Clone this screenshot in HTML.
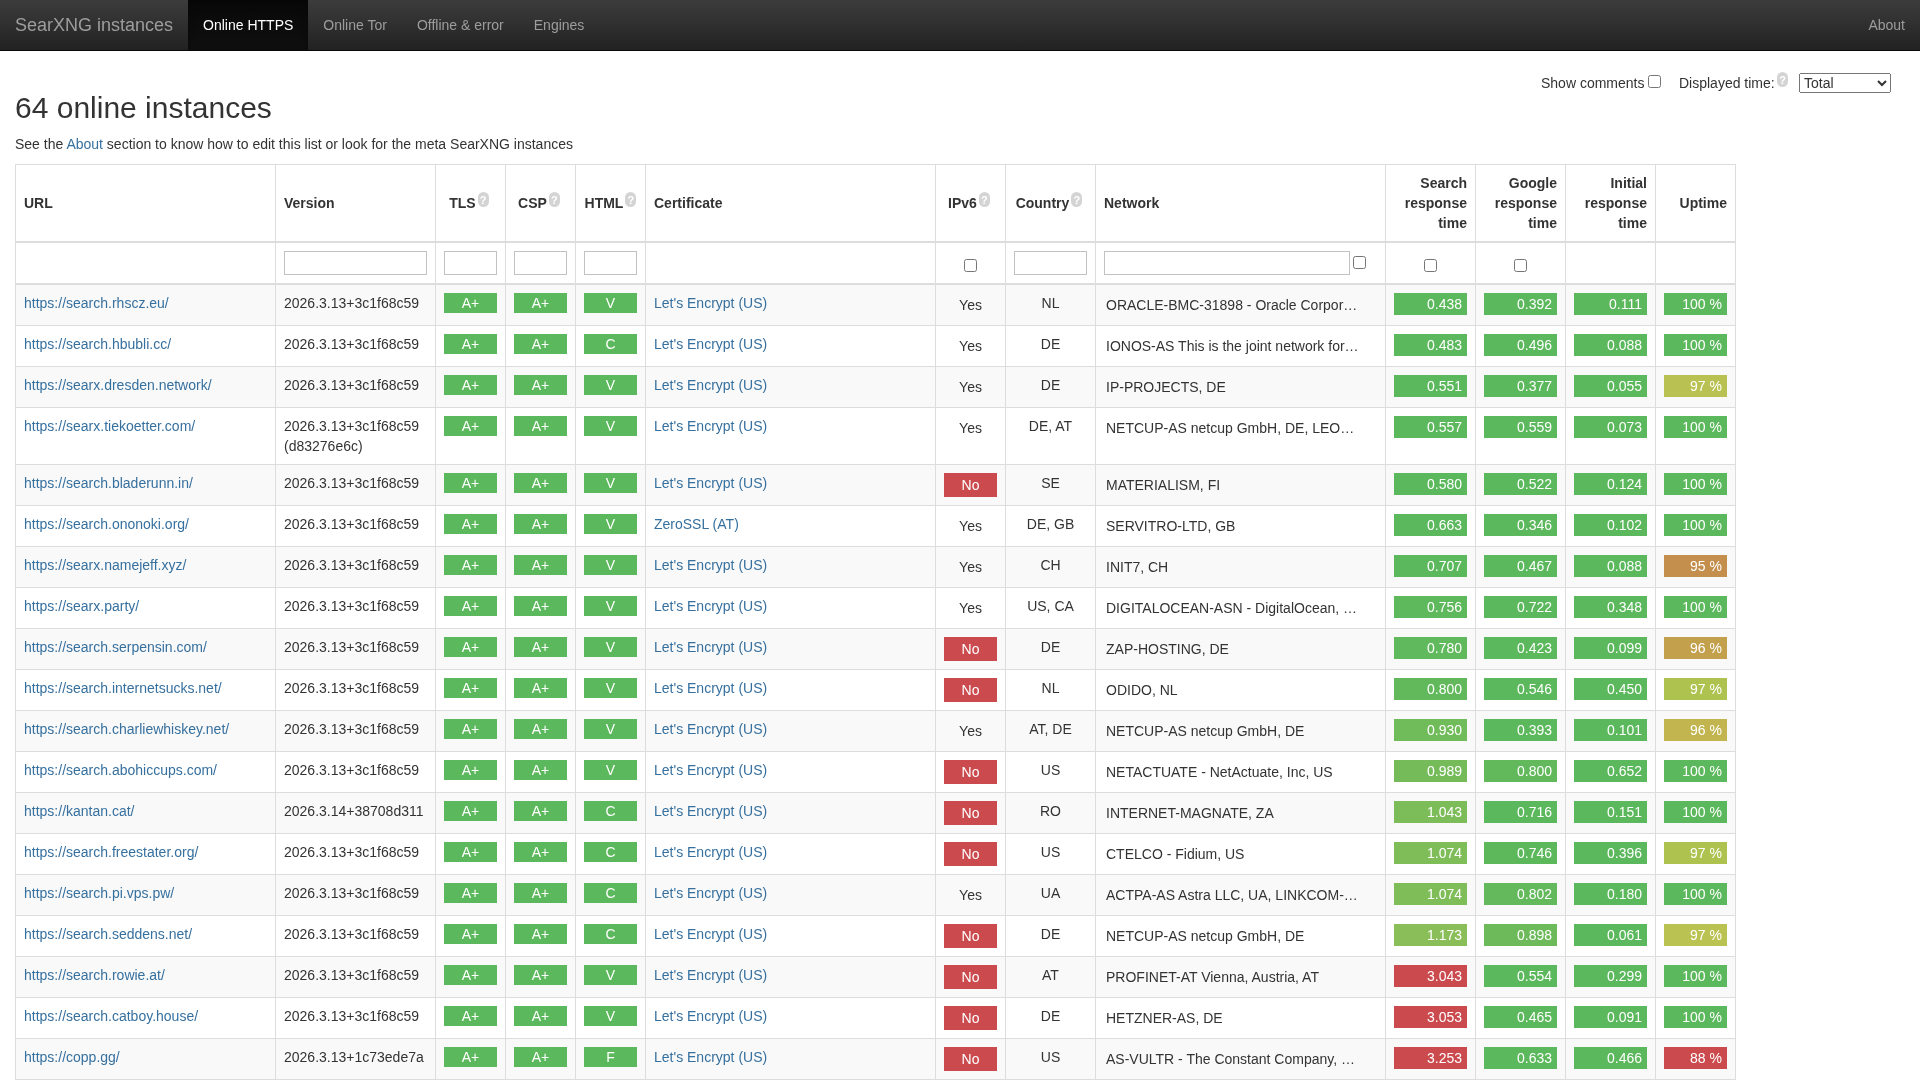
<!DOCTYPE html><html><head><meta charset="utf-8"><title>SearXNG instances</title><style>
*{box-sizing:border-box}
html,body{margin:0;padding:0;background:#fff}
body{-webkit-font-smoothing:antialiased;will-change:transform}
body{font-family:"Liberation Sans",sans-serif;font-size:14px;line-height:20px;color:#333;width:1920px;height:1080px;overflow:hidden;position:relative}
a{color:#36709f;text-decoration:none}
.nav{height:51px;border-bottom:1px solid #080808;background:linear-gradient(to bottom,#3c3c3c 0%,#222 100%);position:relative}
.nav a{float:left;height:50px;padding:15px;line-height:20px;color:#9d9d9d;white-space:nowrap}
.nav a.rt{float:right}
.nav .brand{font-size:18px;padding:15px}
.nav .active{color:#fff;background:linear-gradient(to bottom,#080808 0%,#0f0f0f 100%);box-shadow:inset 0 3px 9px rgba(0,0,0,.25)}
.ctl{position:absolute;left:0;top:0;white-space:nowrap}
h1{position:absolute;left:15px;top:91px;margin:0;font-size:30px;line-height:33px;font-weight:500;color:#333}
p.intro{position:absolute;left:15px;top:134px;margin:0}
table{position:absolute;left:15px;top:164px;border-collapse:collapse;border-spacing:0;table-layout:fixed;width:1720px;border:1px solid #ddd}
th,td{border:1px solid #ddd;padding:8px;vertical-align:top;text-align:left}
thead th{vertical-align:bottom;border-bottom:2px solid #ddd}
thead tr.hdr th{vertical-align:middle;font-weight:bold}
tbody tr:nth-child(odd){background:#f9f9f9}
.c{text-align:center}
.r{text-align:right}
.q{display:inline-block;width:11px;height:15px;border-radius:5.5px;background:#d4d4d4;vertical-align:top;margin-left:2px;margin-top:-1px;color:#fff;font-size:11px;line-height:16px;text-align:center;font-weight:bold}
th.qc{white-space:nowrap}
th.qc span.hq{position:relative;left:-1.5px}
.lbl{display:block;color:#fff;text-align:center;line-height:20px;height:20px;background:#5cb85c}
.tm{display:block;color:#fff;text-align:right;line-height:20px;height:22px;padding:1px 5px 1px 0}
.no{display:block;color:#fff;text-align:center;line-height:20px;height:24px;padding:2px 0;background:#ca4a4d}
.yes{display:block;text-align:center;line-height:20px;height:24px;padding:2px 0}
.net{display:block;padding:2px 0 0 2px;white-space:nowrap;overflow:hidden}
input[type=text]{display:block;width:100%;height:24px;margin:0;padding:1px 2px;border:1px solid #c2c2c2;font:inherit;background:#fff}
input[type=checkbox]{margin:0;width:13px;height:13px;position:relative;top:2px}
.nck{top:1px!important;left:-1px}
</style></head><body><div class="nav"><a class="brand" href="#">SearXNG instances</a><a class="active" href="#">Online HTTPS</a><a href="#">Online Tor</a><a href="#">Offline &amp; error</a><a href="#">Engines</a><a class="rt" href="#">About</a></div><div class="ctl"><span style="position:absolute;left:1541px;top:73px">Show comments</span><input type="checkbox" style="position:absolute;left:1648px;top:75px"><span style="position:absolute;left:1679px;top:73px">Displayed time:</span><span class="q" style="position:absolute;left:1777px;top:72px;margin:0">?</span><select style="position:absolute;left:1799px;top:73px;width:92px;height:20px;font-family:inherit;font-size:14px;color:#333"><option>Total</option></select></div><h1>64 online instances</h1><p class="intro">See the <a href="#">About</a> section to know how to edit this list or look for the meta SearXNG instances</p><table><colgroup><col style="width:260px"><col style="width:160px"><col style="width:70px"><col style="width:70px"><col style="width:70px"><col style="width:290px"><col style="width:70px"><col style="width:90px"><col style="width:290px"><col style="width:90px"><col style="width:90px"><col style="width:90px"><col style="width:80px"></colgroup><thead><tr class="hdr"><th>URL</th><th>Version</th><th class="c qc"><span class="hq">TLS<span class="q">?</span></span></th><th class="c qc"><span class="hq">CSP<span class="q">?</span></span></th><th class="c qc"><span class="hq" style="left:0">HTML<span class="q">?</span></span></th><th>Certificate</th><th class="c qc"><span class="hq">IPv6<span class="q">?</span></span></th><th class="c qc"><span class="hq">Country<span class="q">?</span></span></th><th>Network</th><th class="r">Search<br>response<br>time</th><th class="r">Google<br>response<br>time</th><th class="r">Initial<br>response<br>time</th><th class="r">Uptime</th></tr><tr class="flt"><th></th><th><input type="text"></th><th><input type="text"></th><th><input type="text"></th><th><input type="text"></th><th></th><th class="c"><input type="checkbox"></th><th><input type="text"></th><th><input type="text" style="display:inline-block;width:246px"> <input type="checkbox" class="nck"></th><th class="c"><input type="checkbox"></th><th class="c"><input type="checkbox"></th><th></th><th></th></tr></thead><tbody><tr><td><a href="#">https://search.rhscz.eu/</a></td><td>2026.3.13+3c1f68c59</td><td><span class="lbl">A+</span></td><td><span class="lbl">A+</span></td><td><span class="lbl">V</span></td><td><a href="#">Let's Encrypt (US)</a></td><td><span class="yes">Yes</span></td><td class="c">NL</td><td><span class="net">ORACLE-BMC-31898 - Oracle Corpor…</span></td><td><span class="tm" style="background:#5cb85c">0.438</span></td><td><span class="tm" style="background:#5cb85c">0.392</span></td><td><span class="tm" style="background:#5cb85c">0.111</span></td><td><span class="tm" style="background:#5cb85c">100 %</span></td></tr><tr><td><a href="#">https://search.hbubli.cc/</a></td><td>2026.3.13+3c1f68c59</td><td><span class="lbl">A+</span></td><td><span class="lbl">A+</span></td><td><span class="lbl">C</span></td><td><a href="#">Let's Encrypt (US)</a></td><td><span class="yes">Yes</span></td><td class="c">DE</td><td><span class="net">IONOS-AS This is the joint network for…</span></td><td><span class="tm" style="background:#5cb85c">0.483</span></td><td><span class="tm" style="background:#5cb85c">0.496</span></td><td><span class="tm" style="background:#5cb85c">0.088</span></td><td><span class="tm" style="background:#5cb85c">100 %</span></td></tr><tr><td><a href="#">https://searx.dresden.network/</a></td><td>2026.3.13+3c1f68c59</td><td><span class="lbl">A+</span></td><td><span class="lbl">A+</span></td><td><span class="lbl">V</span></td><td><a href="#">Let's Encrypt (US)</a></td><td><span class="yes">Yes</span></td><td class="c">DE</td><td><span class="net">IP-PROJECTS, DE</span></td><td><span class="tm" style="background:#5cb85c">0.551</span></td><td><span class="tm" style="background:#5cb85c">0.377</span></td><td><span class="tm" style="background:#5cb85c">0.055</span></td><td><span class="tm" style="background:#b8c152">97 %</span></td></tr><tr><td><a href="#">https://searx.tiekoetter.com/</a></td><td>2026.3.13+3c1f68c59<br>(d83276e6c)</td><td><span class="lbl">A+</span></td><td><span class="lbl">A+</span></td><td><span class="lbl">V</span></td><td><a href="#">Let's Encrypt (US)</a></td><td><span class="yes">Yes</span></td><td class="c">DE, AT</td><td><span class="net">NETCUP-AS netcup GmbH, DE, LEO…</span></td><td><span class="tm" style="background:#5cb85c">0.557</span></td><td><span class="tm" style="background:#5cb85c">0.559</span></td><td><span class="tm" style="background:#5cb85c">0.073</span></td><td><span class="tm" style="background:#5cb85c">100 %</span></td></tr><tr><td><a href="#">https://search.bladerunn.in/</a></td><td>2026.3.13+3c1f68c59</td><td><span class="lbl">A+</span></td><td><span class="lbl">A+</span></td><td><span class="lbl">V</span></td><td><a href="#">Let's Encrypt (US)</a></td><td><span class="no">No</span></td><td class="c">SE</td><td><span class="net">MATERIALISM, FI</span></td><td><span class="tm" style="background:#5cb85c">0.580</span></td><td><span class="tm" style="background:#5cb85c">0.522</span></td><td><span class="tm" style="background:#5cb85c">0.124</span></td><td><span class="tm" style="background:#5cb85c">100 %</span></td></tr><tr><td><a href="#">https://search.ononoki.org/</a></td><td>2026.3.13+3c1f68c59</td><td><span class="lbl">A+</span></td><td><span class="lbl">A+</span></td><td><span class="lbl">V</span></td><td><a href="#">ZeroSSL (AT)</a></td><td><span class="yes">Yes</span></td><td class="c">DE, GB</td><td><span class="net">SERVITRO-LTD, GB</span></td><td><span class="tm" style="background:#5cb85c">0.663</span></td><td><span class="tm" style="background:#5cb85c">0.346</span></td><td><span class="tm" style="background:#5cb85c">0.102</span></td><td><span class="tm" style="background:#5cb85c">100 %</span></td></tr><tr><td><a href="#">https://searx.namejeff.xyz/</a></td><td>2026.3.13+3c1f68c59</td><td><span class="lbl">A+</span></td><td><span class="lbl">A+</span></td><td><span class="lbl">V</span></td><td><a href="#">Let's Encrypt (US)</a></td><td><span class="yes">Yes</span></td><td class="c">CH</td><td><span class="net">INIT7, CH</span></td><td><span class="tm" style="background:#5cb85c">0.707</span></td><td><span class="tm" style="background:#5cb85c">0.467</span></td><td><span class="tm" style="background:#5cb85c">0.088</span></td><td><span class="tm" style="background:#c48e4c">95 %</span></td></tr><tr><td><a href="#">https://searx.party/</a></td><td>2026.3.13+3c1f68c59</td><td><span class="lbl">A+</span></td><td><span class="lbl">A+</span></td><td><span class="lbl">V</span></td><td><a href="#">Let's Encrypt (US)</a></td><td><span class="yes">Yes</span></td><td class="c">US, CA</td><td><span class="net">DIGITALOCEAN-ASN - DigitalOcean, …</span></td><td><span class="tm" style="background:#5eb85c">0.756</span></td><td><span class="tm" style="background:#5cb85c">0.722</span></td><td><span class="tm" style="background:#5cb85c">0.348</span></td><td><span class="tm" style="background:#5cb85c">100 %</span></td></tr><tr><td><a href="#">https://search.serpensin.com/</a></td><td>2026.3.13+3c1f68c59</td><td><span class="lbl">A+</span></td><td><span class="lbl">A+</span></td><td><span class="lbl">V</span></td><td><a href="#">Let's Encrypt (US)</a></td><td><span class="no">No</span></td><td class="c">DE</td><td><span class="net">ZAP-HOSTING, DE</span></td><td><span class="tm" style="background:#60b95c">0.780</span></td><td><span class="tm" style="background:#5cb85c">0.423</span></td><td><span class="tm" style="background:#5cb85c">0.099</span></td><td><span class="tm" style="background:#c2a04c">96 %</span></td></tr><tr><td><a href="#">https://search.internetsucks.net/</a></td><td>2026.3.13+3c1f68c59</td><td><span class="lbl">A+</span></td><td><span class="lbl">A+</span></td><td><span class="lbl">V</span></td><td><a href="#">Let's Encrypt (US)</a></td><td><span class="no">No</span></td><td class="c">NL</td><td><span class="net">ODIDO, NL</span></td><td><span class="tm" style="background:#62b95b">0.800</span></td><td><span class="tm" style="background:#5cb85c">0.546</span></td><td><span class="tm" style="background:#5cb85c">0.450</span></td><td><span class="tm" style="background:#aec250">97 %</span></td></tr><tr><td><a href="#">https://search.charliewhiskey.net/</a></td><td>2026.3.13+3c1f68c59</td><td><span class="lbl">A+</span></td><td><span class="lbl">A+</span></td><td><span class="lbl">V</span></td><td><a href="#">Let's Encrypt (US)</a></td><td><span class="yes">Yes</span></td><td class="c">AT, DE</td><td><span class="net">NETCUP-AS netcup GmbH, DE</span></td><td><span class="tm" style="background:#70bb5a">0.930</span></td><td><span class="tm" style="background:#5cb85c">0.393</span></td><td><span class="tm" style="background:#5cb85c">0.101</span></td><td><span class="tm" style="background:#c2b44e">96 %</span></td></tr><tr><td><a href="#">https://search.abohiccups.com/</a></td><td>2026.3.13+3c1f68c59</td><td><span class="lbl">A+</span></td><td><span class="lbl">A+</span></td><td><span class="lbl">V</span></td><td><a href="#">Let's Encrypt (US)</a></td><td><span class="no">No</span></td><td class="c">US</td><td><span class="net">NETACTUATE - NetActuate, Inc, US</span></td><td><span class="tm" style="background:#76bb5a">0.989</span></td><td><span class="tm" style="background:#62b95b">0.800</span></td><td><span class="tm" style="background:#5cb85c">0.652</span></td><td><span class="tm" style="background:#5cb85c">100 %</span></td></tr><tr><td><a href="#">https://kantan.cat/</a></td><td>2026.3.14+38708d311</td><td><span class="lbl">A+</span></td><td><span class="lbl">A+</span></td><td><span class="lbl">C</span></td><td><a href="#">Let's Encrypt (US)</a></td><td><span class="no">No</span></td><td class="c">RO</td><td><span class="net">INTERNET-MAGNATE, ZA</span></td><td><span class="tm" style="background:#7cbc59">1.043</span></td><td><span class="tm" style="background:#5cb85c">0.716</span></td><td><span class="tm" style="background:#5cb85c">0.151</span></td><td><span class="tm" style="background:#5cb85c">100 %</span></td></tr><tr><td><a href="#">https://search.freestater.org/</a></td><td>2026.3.13+3c1f68c59</td><td><span class="lbl">A+</span></td><td><span class="lbl">A+</span></td><td><span class="lbl">C</span></td><td><a href="#">Let's Encrypt (US)</a></td><td><span class="no">No</span></td><td class="c">US</td><td><span class="net">CTELCO - Fidium, US</span></td><td><span class="tm" style="background:#7fbd59">1.074</span></td><td><span class="tm" style="background:#5db85c">0.746</span></td><td><span class="tm" style="background:#5cb85c">0.396</span></td><td><span class="tm" style="background:#aec250">97 %</span></td></tr><tr><td><a href="#">https://search.pi.vps.pw/</a></td><td>2026.3.13+3c1f68c59</td><td><span class="lbl">A+</span></td><td><span class="lbl">A+</span></td><td><span class="lbl">C</span></td><td><a href="#">Let's Encrypt (US)</a></td><td><span class="yes">Yes</span></td><td class="c">UA</td><td><span class="net">ACTPA-AS Astra LLC, UA, LINKCOM-…</span></td><td><span class="tm" style="background:#7fbd59">1.074</span></td><td><span class="tm" style="background:#63b95b">0.802</span></td><td><span class="tm" style="background:#5cb85c">0.180</span></td><td><span class="tm" style="background:#5cb85c">100 %</span></td></tr><tr><td><a href="#">https://search.seddens.net/</a></td><td>2026.3.13+3c1f68c59</td><td><span class="lbl">A+</span></td><td><span class="lbl">A+</span></td><td><span class="lbl">C</span></td><td><a href="#">Let's Encrypt (US)</a></td><td><span class="no">No</span></td><td class="c">DE</td><td><span class="net">NETCUP-AS netcup GmbH, DE</span></td><td><span class="tm" style="background:#89be58">1.173</span></td><td><span class="tm" style="background:#6dba5a">0.898</span></td><td><span class="tm" style="background:#5cb85c">0.061</span></td><td><span class="tm" style="background:#bac252">97 %</span></td></tr><tr><td><a href="#">https://search.rowie.at/</a></td><td>2026.3.13+3c1f68c59</td><td><span class="lbl">A+</span></td><td><span class="lbl">A+</span></td><td><span class="lbl">V</span></td><td><a href="#">Let's Encrypt (US)</a></td><td><span class="no">No</span></td><td class="c">AT</td><td><span class="net">PROFINET-AT Vienna, Austria, AT</span></td><td><span class="tm" style="background:#ca4a4d">3.043</span></td><td><span class="tm" style="background:#5cb85c">0.554</span></td><td><span class="tm" style="background:#5cb85c">0.299</span></td><td><span class="tm" style="background:#5cb85c">100 %</span></td></tr><tr><td><a href="#">https://search.catboy.house/</a></td><td>2026.3.13+3c1f68c59</td><td><span class="lbl">A+</span></td><td><span class="lbl">A+</span></td><td><span class="lbl">V</span></td><td><a href="#">Let's Encrypt (US)</a></td><td><span class="no">No</span></td><td class="c">DE</td><td><span class="net">HETZNER-AS, DE</span></td><td><span class="tm" style="background:#ca4a4d">3.053</span></td><td><span class="tm" style="background:#5cb85c">0.465</span></td><td><span class="tm" style="background:#5cb85c">0.091</span></td><td><span class="tm" style="background:#5cb85c">100 %</span></td></tr><tr><td><a href="#">https://copp.gg/</a></td><td>2026.3.13+1c73ede7a</td><td><span class="lbl">A+</span></td><td><span class="lbl">A+</span></td><td><span class="lbl">F</span></td><td><a href="#">Let's Encrypt (US)</a></td><td><span class="no">No</span></td><td class="c">US</td><td><span class="net">AS-VULTR - The Constant Company, …</span></td><td><span class="tm" style="background:#ca4a4d">3.253</span></td><td><span class="tm" style="background:#5cb85c">0.633</span></td><td><span class="tm" style="background:#5cb85c">0.466</span></td><td><span class="tm" style="background:#ca4a4d">88 %</span></td></tr></tbody></table></body></html>
